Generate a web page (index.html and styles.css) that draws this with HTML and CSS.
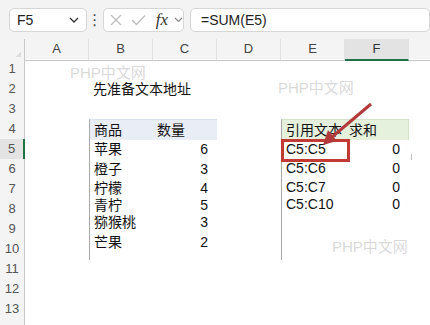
FILE: index.html
```html
<!DOCTYPE html>
<html lang="zh-CN">
<head>
    <meta charset="UTF-8">
    <meta name="viewport" content="width=device-width, initial-scale=1.0">
    <title>SUM 引用文本</title>
    <link rel="stylesheet" href="styles.css">
</head>
<body>
<div class="page">
    <!--formula bar-->
    <div class="toolbar">
        <div class="namebox">
            <span>F5</span>
            <svg class="chev" width="10" height="6" viewBox="0 0 10 6"><path d="M1 1l4 4 4-4" fill="none" stroke="#333" stroke-width="1.3"/></svg>
        </div>
        <div class="dots">⋮</div>
        <div class="fxbox">
            <svg width="12" height="12" viewBox="0 0 12 12"><path d="M1 1l10 10M11 1L1 11" stroke="#bdbdbd" stroke-width="1.3"/></svg>
            <svg width="15" height="12" viewBox="0 0 15 12"><path d="M1 6l4.5 4.5L14 1.5" fill="none" stroke="#bdbdbd" stroke-width="1.3"/></svg>
            <span class="fx">fx</span>
            <svg class="chev" width="9" height="6" viewBox="0 0 9 6"><path d="M1 1l3.5 3.5L8 1" fill="none" stroke="#888" stroke-width="1.2"/></svg>
        </div>
        <div class="formula">=SUM(E5)</div>
    </div>

    <!--sheet-->
    <div class="sheet">
        <div class="row head">
            <div class="corner"></div><div class="ch">A</div><div class="ch">B</div><div class="ch">C</div><div class="ch">D</div><div class="ch">E</div><div class="ch sel">F</div><div class="ch"></div>
        </div>
        <div class="row">
            <div class="rh">1</div><div class="c"></div><div class="c"></div><div class="c"></div><div class="c"></div><div class="c"></div><div class="c"></div><div class="c"></div>
        </div>
        <div class="row">
            <div class="rh">2</div><div class="c"></div><div class="c">先准备文本地址</div><div class="c"></div><div class="c"></div><div class="c"></div><div class="c"></div><div class="c"></div>
        </div>
        <div class="row">
            <div class="rh">3</div><div class="c"></div><div class="c"></div><div class="c"></div><div class="c"></div><div class="c"></div><div class="c"></div><div class="c"></div>
        </div>
        <div class="row">
            <div class="rh">4</div><div class="c"></div><div class="c lb bh">商品</div><div class="c bh">数量</div><div class="c"></div><div class="c lb gh">引用文本</div><div class="c gh">求和</div><div class="c"></div>
        </div>
        <div class="row">
            <div class="rh sel">5</div><div class="c"></div><div class="c lb">苹果</div><div class="c n">6</div><div class="c"></div><div class="c lb">C5:C5</div><div class="c n">0</div><div class="c"></div>
        </div>
        <div class="row">
            <div class="rh">6</div><div class="c"></div><div class="c lb">橙子</div><div class="c n">3</div><div class="c"></div><div class="c lb t1">C5:C6</div><div class="c n t1">0</div><div class="c"></div>
        </div>
        <div class="row">
            <div class="rh">7</div><div class="c"></div><div class="c lb t1">柠檬</div><div class="c n t1">4</div><div class="c"></div><div class="c lb t2">C5:C7</div><div class="c n t2">0</div><div class="c"></div>
        </div>
        <div class="row">
            <div class="rh">8</div><div class="c"></div><div class="c lb t4">青柠</div><div class="c n t4">5</div><div class="c"></div><div class="c lb t5">C5:C10</div><div class="c n t5">0</div><div class="c"></div>
        </div>
        <div class="row">
            <div class="rh">9</div><div class="c"></div><div class="c lb t7">猕猴桃</div><div class="c n t7">3</div><div class="c"></div><div class="c lb"></div><div class="c"></div><div class="c"></div>
        </div>
        <div class="row">
            <div class="rh">10</div><div class="c"></div><div class="c lb t7">芒果</div><div class="c n t7">2</div><div class="c"></div><div class="c lb"></div><div class="c"></div><div class="c"></div>
        </div>
        <div class="row">
            <div class="rh">11</div><div class="c"></div><div class="c"></div><div class="c"></div><div class="c"></div><div class="c"></div><div class="c"></div><div class="c"></div>
        </div>
        <div class="row">
            <div class="rh">12</div><div class="c"></div><div class="c"></div><div class="c"></div><div class="c"></div><div class="c"></div><div class="c"></div><div class="c"></div>
        </div>
        <div class="row">
            <div class="rh">13</div><div class="c"></div><div class="c"></div><div class="c"></div><div class="c"></div><div class="c"></div><div class="c"></div><div class="c"></div>
        </div>
        <div class="row">
            <div class="rh"></div>
        </div>
    </div>

    <!--annotations over the sheet-->
    <div class="wm wm1">PHP中文网</div>
    <div class="wm wm2">PHP中文网</div>
    <div class="wm wm3">PHP中文网</div>
    <div class="mark"></div>
    <svg class="arrow" width="430" height="325" viewBox="0 0 430 325">
        <line x1="371" y1="104" x2="332" y2="137" stroke="#b23a3a" stroke-width="3"/>
        <polygon points="323,145 337,141 328,130" fill="#b23a3a"/>
        <line x1="411.5" y1="154" x2="411.5" y2="160" stroke="#bbb" stroke-width="1"/>
    </svg>
</div>
</body>
</html>
```

FILE: styles.css
```css
body{
    margin: 0;
    font-family: "Liberation Sans", "Noto Sans CJK SC", sans-serif;
    background-color: #fff;
    overflow: hidden;
}
.page{
    position: relative;
    width: 430px;
    height: 325px;
    overflow: hidden;
}
/* formula bar */
.toolbar{
    height: 39px;
    background-color: #f3f3f3;
    display: flex;
    align-items: center;
    padding-left: 9px;
    box-sizing: border-box;
}
.namebox{
    width: 100px;
    height: 24px;
    box-sizing: border-box;
    border: 1px solid #d6d6d6;
    border-radius: 5px;
    background-color: #fff;
    display: flex;
    align-items: center;
    justify-content: space-between;
    padding: 0 7px 0 7px;
    font-size: 14px;
    color: #222;
}
.dots{
    width: 22px;
    text-align: center;
    font-size: 15px;
    color: #444;
    font-family: "DejaVu Sans", sans-serif;
}
.fxbox{
    width: 84px;
    height: 24px;
    box-sizing: border-box;
    border: 1px solid #d6d6d6;
    border-radius: 5px;
    background-color: #fff;
    display: flex;
    align-items: center;
    gap: 9px;
    padding-left: 6px;
}
.fx{
    font-family: "Liberation Serif", serif;
    font-style: italic;
    font-size: 17px;
    color: #333;
    margin-left: 1px;
    margin-right: -3px;
}
.formula{
    width: 240px;
    height: 24px;
    margin-left: 6px;
    box-sizing: border-box;
    border: 1px solid #d6d6d6;
    border-radius: 5px;
    background-color: #fff;
    padding-left: 10px;
    line-height: 22px;
    font-size: 14px;
    color: #222;
    flex-shrink: 0;
}
/* grid */
.row{
    display: grid;
    grid-template-columns: 25px repeat(7, 64px);
    height: 20px;
}
.head{
    background-color: #f4f4f4;
}
.corner{
    border-right: 1px solid #c8c8c8;
    border-bottom: 1px solid #c8c8c8;
    background: linear-gradient(135deg, transparent 70%, #dcdcdc 70%) no-repeat right 3px bottom 3px / 9px 9px;
}
.ch{
    border-bottom: 1px solid #c8c8c8;
    border-right: 1px solid #e2e2e2;
    text-align: center;
    font-size: 13px;
    line-height: 20px;
    color: #444;
}
.ch.sel{
    background-color: #e3e3e3;
    border-bottom: 2px solid #1e7145;
    color: #333;
}
.rh{
    background-color: #f4f4f4;
    border-right: 1px solid #c8c8c8;
    border-bottom: 1px solid #e4e4e4;
    box-sizing: border-box;
    text-align: center;
    font-size: 13px;
    line-height: 20px;
    color: #555;
}
.rh.sel{
    background-color: #e3e3e3;
    border-right: 2px solid #1e7145;
}
.c{
    padding: 0 4px;
    box-sizing: border-box;
    font-size: 14px;
    line-height: 20px;
    color: #111;
    white-space: nowrap;
}
/* the pasted rows in the screenshot sit a bit higher than the grid */
.t1{ line-height: 18px; }
.t2{ line-height: 16px; }
.t4{ line-height: 12px; }
.t5{ line-height: 10px; }
.t7{ line-height: 6px; }
.n{
    text-align: right;
    padding-right: 9px;
}
.lb{
    border-left: 1px solid #a8a8a8;
}
.bh{
    background-color: #e9eef6;
    border-top: 1px solid #dde3ec;
}
.gh{
    background-color: #e5f0dd;
    border-top: 1px solid #d3e2c8;
}
.gh + .gh{
    border-right: 1px solid #d3e2c8;
}
/* annotations */
.wm{
    position: absolute;
    font-size: 15px;
    line-height: 20px;
    color: rgba(170, 170, 170, 0.45);
}
.wm1{ left: 70px; top: 63px; }
.wm2{ left: 278px; top: 78px; }
.wm3{ left: 332px; top: 237px; }
.mark{
    position: absolute;
    left: 281px;
    top: 139px;
    width: 69px;
    height: 23px;
    border: 3px solid #c23a34;
    box-sizing: border-box;
}
.arrow{
    position: absolute;
    left: 0;
    top: 0;
}
```
